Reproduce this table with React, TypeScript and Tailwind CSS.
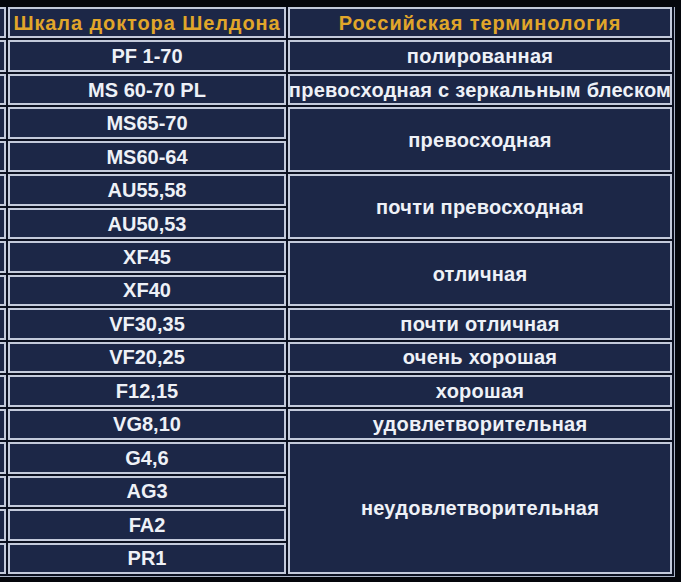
import * as React from "react";

type Term = { label: string; row: string };

const rowStart = [
  "row-start-1",
  "row-start-2",
  "row-start-3",
  "row-start-4",
  "row-start-5",
  "row-start-6",
  "row-start-7",
  "row-start-8",
  "row-start-9",
  "row-start-10",
  "row-start-11",
  "row-start-12",
  "row-start-13",
  "row-start-14",
  "row-start-15",
  "row-start-16",
  "row-start-17",
];

const grades = [
  "PF 1-70",
  "MS 60-70 PL",
  "MS65-70",
  "MS60-64",
  "AU55,58",
  "AU50,53",
  "XF45",
  "XF40",
  "VF30,35",
  "VF20,25",
  "F12,15",
  "VG8,10",
  "G4,6",
  "AG3",
  "FA2",
  "PR1",
];

// объединённые ячейки второй колонки
const terms: Term[] = [
  { label: "полированная", row: "row-start-2 row-span-1" },
  { label: "превосходная с зеркальным блеском", row: "row-start-3 row-span-1" },
  { label: "превосходная", row: "row-start-4 row-span-2" },
  { label: "почти превосходная", row: "row-start-6 row-span-2" },
  { label: "отличная", row: "row-start-8 row-span-2" },
  { label: "почти отличная", row: "row-start-10 row-span-1" },
  { label: "очень хорошая", row: "row-start-11 row-span-1" },
  { label: "хорошая", row: "row-start-12 row-span-1" },
  { label: "удовлетворительная", row: "row-start-13 row-span-1" },
  { label: "неудовлетворительная", row: "row-start-14 row-span-4" },
];

const box = "border-2 border-[#c3cadb] bg-[#1c2747]";
const cell = `${box} flex items-center justify-center overflow-hidden whitespace-nowrap font-bold leading-none`;

export default function App() {
  return (
    <div className="h-[582px] w-[681px] overflow-hidden bg-[#05070c] pt-[7px] font-['Liberation_Sans',Arial,sans-serif]">
      <div className="ml-[-4px] w-fit border-b border-r border-[#a9b3c7] bg-[#0b1020] pb-[2px] pr-[2px]">
        <div className="grid h-[567px] grid-cols-[10px_278px_384px] grid-rows-[repeat(17,minmax(0,1fr))] gap-[2px]">
          {/* обрезанная колонка слева */}
          {rowStart.map((r) => (
            <div key={r} className={`${box} col-start-1 ${r}`} />
          ))}

          <div className={`${cell} col-start-2 row-start-1 text-[20px] tracking-[0.9px] text-[#e1a62a]`}>
            Шкала доктора Шелдона
          </div>
          <div className={`${cell} col-start-3 row-start-1 text-[20px] tracking-[0.9px] text-[#e1a62a]`}>
            Российская терминология
          </div>

          {grades.map((g, i) => (
            <div
              key={g}
              className={`${cell} col-start-2 ${rowStart[i + 1]} text-[20px] text-[#eef1f7]`}
            >
              {g}
            </div>
          ))}

          {terms.map((t) => (
            <div
              key={t.label}
              className={`${cell} col-start-3 ${t.row} text-[20px] tracking-[0.25px] text-[#eef1f7]`}
            >
              {t.label}
            </div>
          ))}
        </div>
      </div>
    </div>
  );
}
